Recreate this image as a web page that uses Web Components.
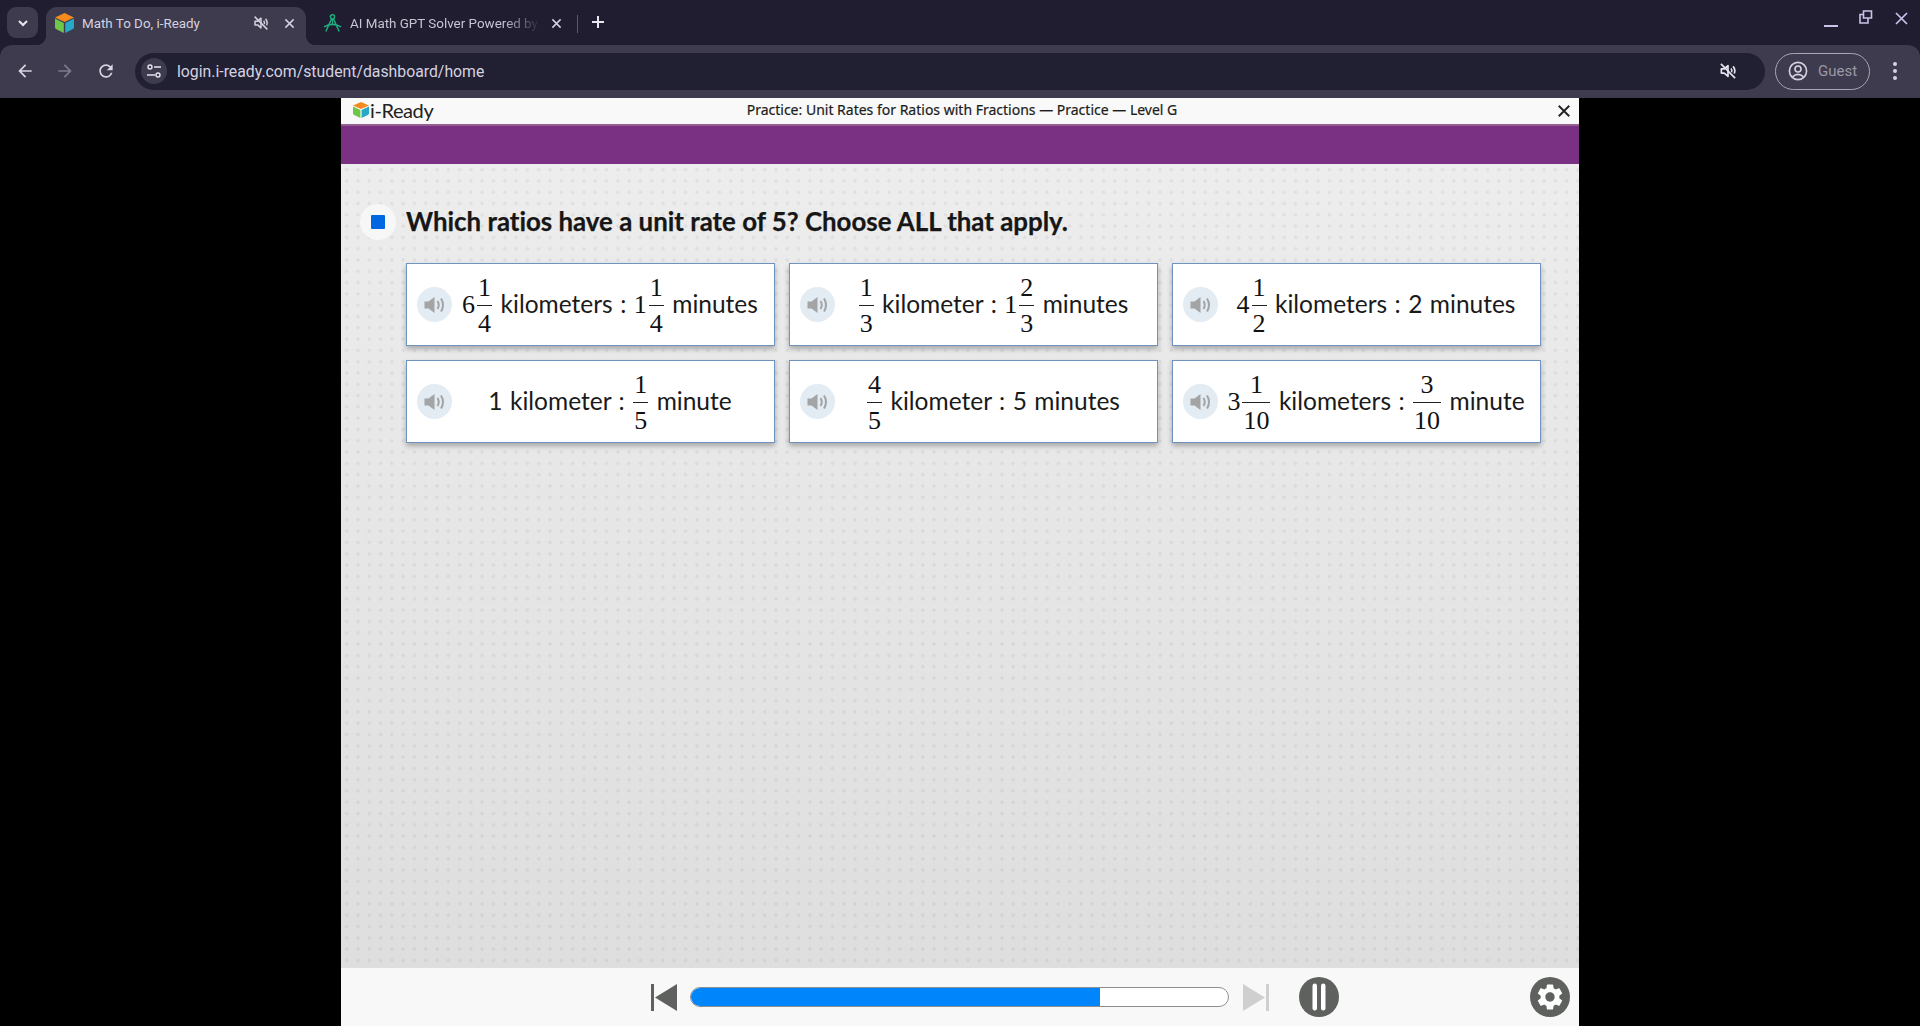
<!DOCTYPE html>
<html>
<head>
<meta charset="utf-8">
<title>Math To Do, i-Ready</title>
<style>
  html, body { margin: 0; height: 100%; background: #000; overflow: hidden; }
  body { display: flex; flex-direction: column; height: 1026px; }
  practice-app { flex: 1; min-height: 0; }
</style>
</head>
<body>
<browser-chrome></browser-chrome>
<practice-app>
  <question-prompt>Which ratios have a unit rate of 5? Choose ALL that apply.</question-prompt>
  <answer-grid>
    <answer-card><m-num>6</m-num><m-frac n="1" d="4"></m-frac> kilometers : <m-num>1</m-num><m-frac n="1" d="4"></m-frac> minutes</answer-card>
    <answer-card><m-frac n="1" d="3"></m-frac> kilometer : <m-num>1</m-num><m-frac n="2" d="3"></m-frac> minutes</answer-card>
    <answer-card><m-num>4</m-num><m-frac n="1" d="2"></m-frac> kilometers : 2 minutes</answer-card>
    <answer-card>1 kilometer : <m-frac n="1" d="5"></m-frac> minute</answer-card>
    <answer-card><m-frac n="4" d="5"></m-frac> kilometer : 5 minutes</answer-card>
    <answer-card><m-num>3</m-num><m-frac n="1" d="10"></m-frac> kilometers : <m-frac n="3" d="10"></m-frac> minute</answer-card>
  </answer-grid>
</practice-app>

<script>
const ICONS = {
  cube: `<svg viewBox="2 1 16 18" width="100%" height="100%" preserveAspectRatio="none"><path d="M10 1 18 5 10 9 2 5z" fill="#f58a1f"/><path d="M2 6 9.4 10v9L3.2 15.6Q2 15 2 14z" fill="#6fc74a"/><path d="M18 6 10.6 10v9l6.2-3.4q1.2-.6 1.2-1.6z" fill="#25a9c4"/></svg>`,
  mute: `<svg viewBox="0 0 24 24" width="100%" height="100%" fill="none" stroke="currentColor" stroke-width="2"><path d="M4 9.5v5h3.5L12 18.5v-13L7.5 9.5z" stroke-linejoin="round"/><path d="M15.5 9a4 4 0 0 1 .8 4.5M18 6.5a8 8 0 0 1 1.5 8.5"/><path d="M3.5 3.5 20.5 20.5"/></svg>`,
  close: `<svg viewBox="0 0 12 12" width="100%" height="100%" fill="none" stroke="currentColor" stroke-width="1.6"><path d="M1.5 1.5 10.5 10.5M10.5 1.5 1.5 10.5"/></svg>`
};

// shadow root helper, every element below uses it
class Base extends HTMLElement {
  constructor(html) {
    super();
    this.attachShadow({mode: "open"}).innerHTML = html;
  }
}

class BrowserChrome extends Base {
  constructor() {
    super(`
<style>
  :host { display: block; height: 98px; background: #1f1d2f; color: #d4d2e0; font-family: Roboto, sans-serif; flex: none; }
  svg { display: block; }
  .strip { height: 45px; display: flex; align-items: flex-end; position: relative; }
  .drop { width: 31px; height: 31px; margin: 0 8px 7px 7px; border-radius: 9px; background: #3d3b4d; display: flex; align-items: center; justify-content: center; }
  .tab { height: 38px; box-sizing: border-box; display: flex; align-items: center; font-size: 13.4px; position: relative; padding-bottom: 6px; }
  .tab.on { width: 260px; background: #3d3b4d; border-radius: 11px 11px 0 0; padding-left: 9px; }
  .tab.on::before, .tab.on::after { content: ""; position: absolute; bottom: 0; width: 10px; height: 10px; }
  .tab.on::before { left: -10px; background: radial-gradient(circle at 0 0, transparent 10px, #3d3b4d 10.5px); }
  .tab.on::after { right: -10px; background: radial-gradient(circle at 100% 0, transparent 10px, #3d3b4d 10.5px); }
  .fav { width: 19px; height: 20px; flex: none; }
  .title { margin-left: 8px; white-space: nowrap; overflow: hidden; flex: 1; }
  .off .title { -webkit-mask-image: linear-gradient(90deg, #000 80%, transparent); mask-image: linear-gradient(90deg, #000 80%, transparent); color: #c6c4d2; }
  .mute { width: 18px; height: 18px; margin-right: 14px; flex: none; }
  .x { width: 11px; height: 11px; margin-right: 11px; flex: none; }
  .tab.off { width: 271px; padding-left: 17px; }
  .sep { width: 1px; height: 18px; background: #5a5869; margin: 0 13px 0 0; align-self: center; position: relative; top: 1px; }
  .plus { width: 14px; height: 14px; margin-bottom: 16px; }
  .win { margin-left: auto; display: flex; align-items: center; color: #c9c2ea; height: 38px; margin-bottom: 6px; }
  .bar { height: 53px; background: #3d3b4d; border-radius: 12px 12px 0 0; display: flex; align-items: center; box-sizing: border-box; padding-bottom: 1px; }
  .nav { width: 20px; height: 20px; flex: none; }
  .omni { width: 1630px; height: 37px; box-sizing: border-box; margin-left: 19px; background: #211f32; border-radius: 19px; display: flex; align-items: center; padding: 0 27px 0 6px; font-size: 15.8px; }
  .site { width: 26px; height: 26px; border-radius: 50%; background: #3d3b4d; display: flex; align-items: center; justify-content: center; flex: none; }
  .url { margin-left: 10px; }
  .omni .end { margin-left: auto; width: 20px; height: 20px; color: #e6e4ee; }
  .guest { width: 95px; height: 37px; box-sizing: border-box; margin-left: 10px; border: 1px solid #a8a6b4; border-radius: 19px; display: flex; align-items: center; padding-left: 12px; color: #9a98a8; font-size: 15px; }
  .guest svg { margin-right: 10px; color: #d6d4e0; }
  .dots { margin-left: 23px; width: 4px; display: flex; flex-direction: column; gap: 3px; }
  .dots i { width: 4px; height: 4px; border-radius: 50%; background: #d6d4e0; }
</style>
<div class="strip">
  <div class="drop"><svg width="14" height="14" viewBox="0 0 14 14" fill="none" stroke="#e8e6f0" stroke-width="2"><path d="M3 5 7 9 11 5"/></svg></div>
  <div class="tab on">
    <div class="fav">${ICONS.cube}</div>
    <div class="title">Math To Do, i-Ready</div>
    <div class="mute">${ICONS.mute}</div>
    <div class="x">${ICONS.close}</div>
  </div>
  <div class="tab off">
    <div class="fav"><svg viewBox="0 0 20 20" width="100%" height="100%" fill="none" stroke="#1fae80" stroke-width="1.5"><circle cx="10" cy="3.500" r="2.200"/><path d="M9 5.500 3 19M11 5.500 17 19M1 14Q10 9 19 14M6.500 11.500h7M10 6v5"/></svg></div>
    <div class="title">AI Math GPT Solver Powered by</div>
    <div class="x" style="margin:0 15px 0 10px">${ICONS.close}</div>
  </div>
  <div class="sep"></div>
  <div class="plus"><svg viewBox="0 0 14 14" width="14" height="14" fill="none" stroke="#e8e6f0" stroke-width="2"><path d="M7 1v12M1 7h12"/></svg></div>
  <div class="win">
    <svg width="14" height="3" viewBox="0 0 14 3" style="margin-top:13px"><rect width="14" height="2" fill="currentColor"/></svg>
    <svg width="14" height="14" viewBox="0 0 14 14" fill="none" stroke="currentColor" stroke-width="1.6" style="margin:-6px 0 0 21px"><path d="M4.5 1h8v7h-8zM4.5 4.5H1v8.5h8V8"/></svg>
    <svg width="13" height="13" viewBox="0 0 13 13" fill="none" stroke="currentColor" stroke-width="1.7" style="margin:-4px 12px 0 22px"><path d="M1 1 12 12M12 1 1 12"/></svg>
  </div>
</div>
<div class="bar">
  <svg class="nav" style="margin-left:15px" viewBox="0 0 24 24" fill="#d8d6e2"><path d="M20 11H7.83l5.59-5.59L12 4l-8 8 8 8 1.41-1.41L7.83 13H20z"/></svg>
  <svg class="nav" style="margin-left:20px" viewBox="0 0 24 24" fill="#7d7b8b"><path d="M4 11h12.17l-5.59-5.59L12 4l8 8-8 8-1.41-1.41L16.17 13H4z"/></svg>
  <svg class="nav" style="margin-left:21px" viewBox="0 0 24 24" fill="#d8d6e2"><path d="M17.65 6.35A7.958 7.958 0 0 0 12 4c-4.42 0-7.99 3.58-7.99 8s3.57 8 7.99 8c3.73 0 6.84-2.55 7.73-6h-2.08A5.99 5.99 0 0 1 12 18c-3.31 0-6-2.69-6-6s2.69-6 6-6c1.66 0 3.14.69 4.22 1.78L13 11h7V4z"/></svg>
  <div class="omni">
    <div class="site"><svg width="16" height="16" viewBox="0 0 16 16" fill="none" stroke="#e6e4ee" stroke-width="1.4"><circle cx="4" cy="4" r="2"/><circle cx="12" cy="12" r="2"/><path d="M8 4h7M1 12h8"/></svg></div>
    <div class="url">login.i-ready.com/student/dashboard/home</div>
    <div class="end">${ICONS.mute}</div>
  </div>
  <div class="guest">
    <svg width="20" height="20" viewBox="0 0 20 20" fill="none" stroke="currentColor" stroke-width="1.6"><circle cx="10" cy="10" r="8.6"/><circle cx="10" cy="8" r="3"/><path d="M4.4 15.8Q10 11 15.600 15.800"/></svg>
    <span>Guest</span>
  </div>
  <div class="dots"><i></i><i></i><i></i></div>
</div>`);
  }
}

class PracticeApp extends Base {
  constructor() {
    super(`
<style>
  :host { display: flex; justify-content: center; }
  .frame { width: 1238px; display: flex; flex-direction: column; }
  header { height: 26px; background: #f9f9f9; display: flex; align-items: center; padding: 0 8px 0 12px; color: #1c1c1c; flex: none; }
  .side { flex: 1; display: flex; align-items: center; }
  .logo { font: 400 20px/24px Lato, sans-serif; letter-spacing: -.4px; color: #222; padding-bottom: 2px; }
  .logo div { width: 16px; height: 16px; margin-right: 1px; }
  .name { text-align: center; font: 400 14px/24px "Noto Sans", sans-serif; white-space: nowrap; -webkit-text-stroke: .2px #1c1c1c; padding-bottom: 2px; }
  .close { width: 14px; height: 14px; color: #222; margin-left: auto; }
  .band { height: 40px; background: #7b3183; flex: none; box-shadow: inset 0 2px 0 #94608f; }
  main { flex: 1; min-height: 0; box-sizing: border-box; padding: 39px 38px 0 65px;
    background: radial-gradient(circle, rgba(0,0,0,.055) 1.4px, transparent 1.9px) 0 0 / 11.3px 11.3px, linear-gradient(#ededed, #dedede); }
  footer { height: 58px; background: #f8f8f8; flex: none; display: flex; align-items: center; padding-left: 310px; box-sizing: border-box; }
  footer svg { flex: none; }
  .track { width: 539px; height: 20px; box-sizing: border-box; margin-left: 13px; border: 1px solid #8d8f90; border-radius: 10px; background: #fff; overflow: hidden; flex: none; }
  .fill { width: 409px; height: 100%; background: #0085fb; }
  .pause { margin-left: 30px; width: 40px; height: 40px; }
  .gear { margin-left: 191px; width: 40px; height: 40px; }
  svg { display: block; }
</style>
<div class="frame">
  <header>
    <div class="side logo"><div>${ICONS.cube}</div><span>i-Ready</span></div>
    <div class="name">Practice: Unit Rates for Ratios with Fractions — Practice — Level G</div>
    <div class="side"><div class="close">${ICONS.close}</div></div>
  </header>
  <div class="band"></div>
  <main><slot></slot></main>
  <footer>
    <svg width="26" height="27" viewBox="0 0 26 27" fill="#5f615e"><rect width="3" height="27"/><path d="M26 0V27L4 13.500z"/></svg>
    <div class="track"><div class="fill"></div></div>
    <svg width="26" height="27" viewBox="0 0 26 27" fill="#cfcfcf" style="margin-left:14px"><rect x="23" width="3" height="27"/><path d="M0 0V27L22 13.500z"/></svg>
    <svg class="pause" viewBox="0 0 40 40"><circle cx="20" cy="20" r="20" fill="#5f615e"/><rect x="13.500" y="6.500" width="4.500" height="27" rx="2.200" fill="#fff"/><rect x="22" y="6.500" width="4.500" height="27" rx="2.200" fill="#fff"/></svg>
    <svg class="gear" viewBox="0 0 40 40"><circle cx="20" cy="20" r="20" fill="#5f615e"/><g transform="translate(4.400 4.400) scale(1.300)"><path fill="#fff" d="M19.14 12.94c.04-.3.06-.61.06-.94 0-.32-.02-.64-.07-.94l2.03-1.58a.49.49 0 0 0 .12-.61l-1.92-3.32a.488.488 0 0 0-.59-.22l-2.39.96c-.5-.38-1.03-.7-1.62-.94l-.36-2.54a.484.484 0 0 0-.48-.41h-3.84c-.24 0-.43.17-.47.41l-.36 2.54c-.59.24-1.13.57-1.62.94l-2.39-.96c-.22-.08-.47 0-.59.22L2.74 8.87c-.12.21-.08.47.12.61l2.03 1.58c-.05.3-.09.63-.09.94s.02.64.07.94l-2.03 1.58a.49.49 0 0 0-.12.61l1.92 3.32c.12.22.37.29.59.22l2.39-.96c.5.38 1.03.7 1.62.94l.36 2.54c.05.24.24.41.48.41h3.84c.24 0 .44-.17.47-.41l.36-2.54c.59-.24 1.13-.56 1.62-.94l2.39.96c.22.08.47 0 .59-.22l1.92-3.32c.12-.22.07-.47-.12-.61l-2.01-1.58zM12 15.6c-1.98 0-3.6-1.62-3.6-3.6s1.62-3.6 3.6-3.6 3.6 1.62 3.6 3.6-1.62 3.6-3.6 3.6z"/></g></svg>
  </footer>
</div>`);
  }
}

class QuestionPrompt extends Base {
  constructor() {
    super(`
<style>
  :host { display: block; position: relative; height: 36px; margin-bottom: 24px; font: 700 25.85px/36px Lato, sans-serif; font-variant-ligatures: none; -webkit-text-stroke: .25px #161616; color: #161616; white-space: nowrap; }
  .mark { position: absolute; left: -46px; top: 1px; width: 36px; height: 36px; border-radius: 50%; background: #f7f7f7; display: flex; align-items: center; justify-content: center; -webkit-text-stroke: 0; }
  .mark i { width: 14px; height: 14px; background: #0066e1; border-radius: 1px; }
</style>
<div class="mark"><i></i></div>
<slot></slot>`);
  }
}

class AnswerGrid extends Base {
  constructor() {
    super(`
<style>
  :host { display: grid; grid-template-columns: repeat(3, 369px); grid-auto-rows: 83px; gap: 14px; }
</style>
<slot></slot>`);
  }
}

class AnswerCard extends Base {
  constructor() {
    super(`
<style>
  :host { display: flex; align-items: center; box-sizing: border-box; background: #fff; border: 1px solid #6f93bf; box-shadow: 0 3px 5px rgba(0,0,0,.28); font: 400 24.5px Lato, sans-serif; word-spacing: 1.2px; color: #1a1a1a; padding-left: 10px; }
  .say { width: 35px; height: 35px; border-radius: 50%; background: #e3ebf3; display: flex; align-items: center; justify-content: center; flex: none; }
  .text { width: 312px; flex: none; margin-left: 2px; text-align: center; white-space: nowrap; position: relative; top: 2px; }
</style>
<div class="say"><svg width="24" height="20" viewBox="0 0 23 20" fill="none"><path d="M1 6.500h4L11 2v16l-6-4.500H1z" fill="#a2a4a5"/><path d="M14 6q2.500 4 0 8M17.500 3.500q4 6.500 0 13" stroke="#a2a4a5" stroke-width="2"/></svg></div>
<div class="text"><slot></slot></div>`);
  }
}

// serif digit of a mixed number
class MNum extends Base {
  constructor() {
    super(`
<style>
  :host { font: 400 26px "Liberation Serif", serif; color: #111; margin-right: 1px; }
</style>
<slot></slot>`);
  }
}

class MFrac extends Base {
  constructor() {
    super(`
<style>
  :host { display: inline-flex; flex-direction: column; align-items: stretch; vertical-align: middle; font: 400 26px/29px "Liberation Serif", serif; color: #111; text-align: center; margin: 0 1px 0 1px; position: relative; top: -1px; }
  div { padding: 0 1px; height: 29px; }
  div + div { border-top: 1px solid #222; padding-top: 3px; margin-top: 3px; }
</style>
<div id="n"></div>
<div id="d"></div>`);
  }
  connectedCallback() {
    this.shadowRoot.querySelector("#n").textContent = this.getAttribute("n");
    this.shadowRoot.querySelector("#d").textContent = this.getAttribute("d");
  }
}

customElements.define("browser-chrome", BrowserChrome);
customElements.define("practice-app", PracticeApp);
customElements.define("question-prompt", QuestionPrompt);
customElements.define("answer-grid", AnswerGrid);
customElements.define("answer-card", AnswerCard);
customElements.define("m-num", MNum);
customElements.define("m-frac", MFrac);
</script>
</body>
</html>
